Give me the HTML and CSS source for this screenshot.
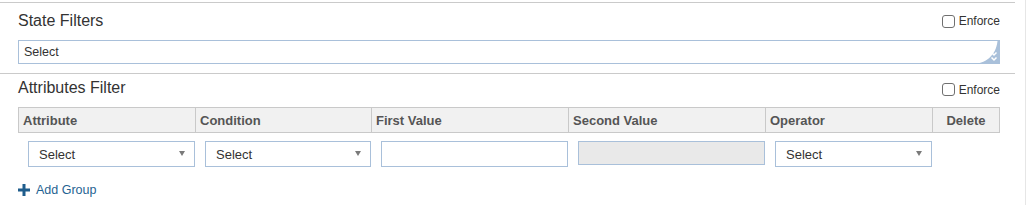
FILE: index.html
```html
<!DOCTYPE html>
<html>
<head>
<meta charset="utf-8">
<link rel="stylesheet" href="styles.css">
</head>
<body>
<div class="frame">
  <div class="main">
    <section class="block state">
      <div class="block-head">
        <h2 class="title">State Filters</h2>
        <label class="enforce"><span class="box"></span>Enforce</label>
      </div>
      <div class="multi">
        <span class="multi-text">Select</span>
        <svg class="corner" width="27" height="23" viewBox="0 0 27 23">
          <path d="M27 0 V23 H0 C13 23 24 15 25.5 0 Z" fill="#a9c0da"/>
          <path d="M19.5 11.5 L22 14 L24.5 11.5" fill="none" stroke="#fff" stroke-width="1.5"/>
          <path d="M19.5 16.5 L22 19 L24.5 16.5" fill="none" stroke="#fff" stroke-width="1.5"/>
        </svg>
      </div>
    </section>
    <section class="block attrs">
      <div class="block-head">
        <h2 class="title">Attributes Filter</h2>
        <label class="enforce"><span class="box"></span>Enforce</label>
      </div>
      <div class="grid-head">
        <div class="th">Attribute</div>
        <div class="th">Condition</div>
        <div class="th">First Value</div>
        <div class="th">Second Value</div>
        <div class="th">Operator</div>
        <div class="th center">Delete</div>
      </div>
      <div class="grid-row">
        <div class="td"><div class="sel">Select<span class="caret"></span></div></div>
        <div class="td"><div class="sel">Select<span class="caret"></span></div></div>
        <div class="td"><div class="inp"></div></div>
        <div class="td"><div class="inp disabled"></div></div>
        <div class="td"><div class="sel">Select<span class="caret"></span></div></div>
        <div class="td"></div>
      </div>
      <div class="add-group">
        <svg class="plus" width="12" height="12" viewBox="0 0 12 12"><path d="M4.5 0 H7.5 V4.5 H12 V7.5 H7.5 V12 H4.5 V7.5 H0 V4.5 H4.5 Z" fill="#1f5d8c"/></svg>
        <span>Add Group</span>
      </div>
    </section>
  </div>
</div>
</body>
</html>
```

FILE: styles.css
```css
html, body {
  margin: 0;
  padding: 0;
  background: #fff;
}
body {
  font-family: "Liberation Sans", Arial, sans-serif;
  color: #333;
}
.frame {
  width: 1025px;
  height: 205px;
  border-right: 1px solid #e6e6e6;
}
.main {
  width: 1015px;
  padding-top: 2px;
}
.block {
  border-top: 1px solid #cacaca;
  padding: 0 15px 0 18px;
}
.block-head {
  display: flex;
  align-items: center;
  justify-content: space-between;
}
.state .block-head {
  height: 34px;
  padding-top: 1px;
  margin-bottom: 2px;
}
.attrs .block-head {
  height: 28px;
  margin-bottom: 5px;
}
.title {
  margin: 0;
  font-size: 16px;
  font-weight: normal;
  color: #333;
}
.attrs .title {
  margin-top: -1px;
}
.enforce {
  display: flex;
  align-items: center;
  font-size: 12px;
  color: #333;
}
.attrs .enforce {
  margin-top: 3px;
}
.box {
  width: 11px;
  height: 11px;
  border: 1px solid #707070;
  border-radius: 3px;
  margin-right: 4px;
  background: #fff;
}
.multi {
  position: relative;
  height: 22px;
  border: 1px solid #a9c0da;
  display: flex;
  align-items: center;
  padding-left: 5px;
  margin-bottom: 9px;
}
.multi-text {
  font-size: 12.5px;
  color: #333;
}
.corner {
  position: absolute;
  right: 0;
  top: 0;
}
.grid-head {
  display: grid;
  grid-template-columns: 176px 176px 197px 197px 167px 67px;
  border: 1px solid #c9c9c9;
  background: #f1f1f1;
  height: 24px;
}
.th {
  border-left: 1px solid #c9c9c9;
  font-size: 13px;
  font-weight: bold;
  color: #555;
  display: flex;
  align-items: center;
  padding-left: 4px;
}
.th:first-child {
  border-left: none;
}
.th.center {
  justify-content: center;
  padding-left: 0;
}
.grid-row {
  display: grid;
  grid-template-columns: 177px 176px 197px 197px 167px 68px;
  padding-top: 8px;
  height: 26px;
}
.td {
  padding-left: 10px;
}
.sel {
  position: relative;
  height: 24px;
  border: 1px solid #a9c0da;
  font-size: 13px;
  color: #333;
  display: flex;
  align-items: center;
  padding-left: 10px;
  background: #fff;
}
.caret {
  position: absolute;
  right: 9px;
  top: 9px;
  width: 0;
  height: 0;
  border-left: 3.5px solid transparent;
  border-right: 3.5px solid transparent;
  border-top: 5px solid #7a7a7a;
}
.inp {
  height: 24px;
  border: 1px solid #a9c0da;
  background: #fff;
}
.inp.disabled {
  height: 22px;
  background: #e9e9e9;
}
.add-group {
  display: flex;
  align-items: center;
  margin-top: 16px;
  color: #1f6392;
  font-size: 12.5px;
}
.plus {
  margin-right: 6px;
}
```
